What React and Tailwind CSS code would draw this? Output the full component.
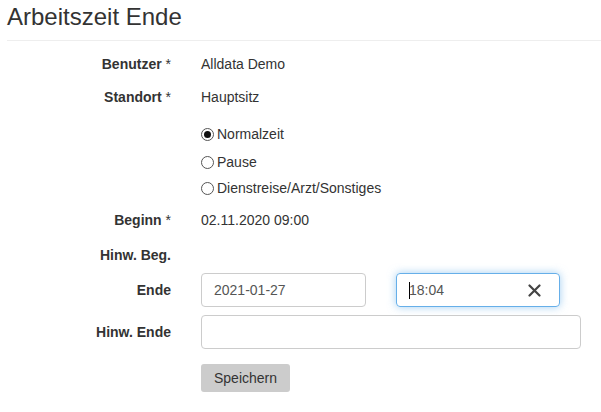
import React from 'react'

const Label = ({ children, req }) => (
  <div className="w-[164px] shrink-0 text-right font-bold">
    {children}
    {req && <span className="font-normal"> *</span>}
  </div>
)

const Radio = ({ checked, label }) => (
  <label className="flex items-center gap-[3px]">
    <span className="w-[13px] h-[13px] rounded-full border border-[#555] bg-white flex items-center justify-center">
      {checked && <span className="w-[7px] h-[7px] rounded-full bg-[#111]" />}
    </span>
    <span>{label}</span>
  </label>
)

const App = () => {
  return (
    <div className="w-[601px] h-[412px] bg-white text-[#333] text-[14px] font-['Liberation_Sans',Arial,sans-serif] pl-[7px]">
      <div className="h-[41px] border-b border-[#eee] pt-[4px]">
        <h1 className="text-[24px] leading-[26px] font-normal">Arbeitszeit Ende</h1>
      </div>

      <div className="mt-[7px] flex items-center h-[32px]">
        <Label req>Benutzer</Label>
        <div className="pl-[30px]">Alldata Demo</div>
      </div>
      <div className="flex items-center h-[34px]">
        <Label req>Standort</Label>
        <div className="pl-[30px]">Hauptsitz</div>
      </div>

      <div className="mt-[6px] flex items-center h-[28px]">
        <Label />
        <div className="pl-[30px]"><Radio checked label="Normalzeit" /></div>
      </div>
      <div className="flex items-center h-[28px]">
        <Label />
        <div className="pl-[30px]"><Radio label="Pause" /></div>
      </div>
      <div className="flex items-center h-[25px]">
        <Label />
        <div className="pl-[30px]"><Radio label="Dienstreise/Arzt/Sonstiges" /></div>
      </div>

      <div className="flex items-center h-[38px]">
        <Label req>Beginn</Label>
        <div className="pl-[30px]">02.11.2020 09:00</div>
      </div>
      <div className="flex items-center h-[32px]">
        <Label>Hinw. Beg.</Label>
      </div>

      <div className="flex items-center h-[38px]">
        <Label>Ende</Label>
        <div className="pl-[30px] flex gap-[30px]">
          <div className="w-[165px] h-[34px] border border-[#ccc] rounded-[4px] px-[12px] flex items-center text-[#555]">
            2021-01-27
          </div>
          <div className="w-[164px] h-[34px] border border-[#66afe9] rounded-[4px] shadow-[0_0_8px_rgba(102,175,233,0.6)] pl-[12px] pr-[18px] flex items-center text-[#555]">
            <span className="w-px h-[17px] bg-black mr-[-1px]" />
            <span className="flex-1">18:04</span>
            <svg width="13" height="13" viewBox="0 0 13 13">
              <path d="M1.5 1.5 L11.5 11.5 M11.5 1.5 L1.5 11.5" stroke="#444" strokeWidth="2.2" strokeLinecap="round" />
            </svg>
          </div>
        </div>
      </div>

      <div className="mt-[6px] flex items-center h-[34px]">
        <Label>Hinw. Ende</Label>
        <div className="pl-[30px]">
          <div className="w-[380px] h-[34px] border border-[#ccc] rounded-[4px]" />
        </div>
      </div>

      <div className="mt-[15px] flex items-center h-[28px]">
        <Label />
        <div className="pl-[30px]">
          <button className="h-[28px] w-[89px] bg-[#ccc] rounded-[3px] text-[#333] text-[14px]">Speichern</button>
        </div>
      </div>
    </div>
  )
}

export default App
